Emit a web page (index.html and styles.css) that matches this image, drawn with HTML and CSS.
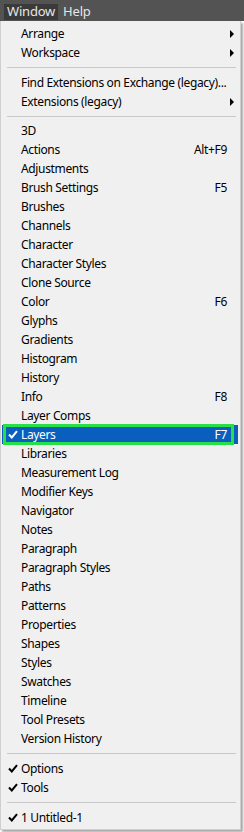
FILE: index.html
```html
<!DOCTYPE html>
<html>
<head>
<meta charset="utf-8">
<link rel="stylesheet" href="styles.css">
</head>
<body>
<div class="menubar">
  <span class="top-item active">Window</span>
  <span class="top-item">Help</span>
</div>
<div class="menu">
  <div class="row"><span class="label">Arrange</span><span class="arrow"></span></div>
  <div class="row"><span class="label">Workspace</span><span class="arrow"></span></div>
  <div class="sep"></div>
  <div class="row"><span class="label">Find Extensions on Exchange (legacy)...</span></div>
  <div class="row"><span class="label">Extensions (legacy)</span><span class="arrow"></span></div>
  <div class="sep sep-short"></div>
  <div class="row"><span class="label">3D</span></div>
  <div class="row"><span class="label">Actions</span><span class="key">Alt+F9</span></div>
  <div class="row"><span class="label">Adjustments</span></div>
  <div class="row"><span class="label">Brush Settings</span><span class="key">F5</span></div>
  <div class="row"><span class="label">Brushes</span></div>
  <div class="row"><span class="label">Channels</span></div>
  <div class="row"><span class="label">Character</span></div>
  <div class="row"><span class="label">Character Styles</span></div>
  <div class="row"><span class="label">Clone Source</span></div>
  <div class="row"><span class="label">Color</span><span class="key">F6</span></div>
  <div class="row"><span class="label">Glyphs</span></div>
  <div class="row"><span class="label">Gradients</span></div>
  <div class="row"><span class="label">Histogram</span></div>
  <div class="row"><span class="label">History</span></div>
  <div class="row"><span class="label">Info</span><span class="key">F8</span></div>
  <div class="row"><span class="label">Layer Comps</span></div>
  <div class="row selected">
    <svg class="check" viewBox="0 0 10 9" width="10" height="9"><path d="M1 4.5 L3.8 7.5 L9 1.2" fill="none" stroke="currentColor" stroke-width="2"/></svg>
    <span class="label">Layers</span><span class="key">F7</span>
    <span class="highlight-box"></span>
  </div>
  <div class="row"><span class="label">Libraries</span></div>
  <div class="row"><span class="label">Measurement Log</span></div>
  <div class="row"><span class="label">Modifier Keys</span></div>
  <div class="row"><span class="label">Navigator</span></div>
  <div class="row"><span class="label">Notes</span></div>
  <div class="row"><span class="label">Paragraph</span></div>
  <div class="row"><span class="label">Paragraph Styles</span></div>
  <div class="row"><span class="label">Paths</span></div>
  <div class="row"><span class="label">Patterns</span></div>
  <div class="row"><span class="label">Properties</span></div>
  <div class="row"><span class="label">Shapes</span></div>
  <div class="row"><span class="label">Styles</span></div>
  <div class="row"><span class="label">Swatches</span></div>
  <div class="row"><span class="label">Timeline</span></div>
  <div class="row"><span class="label">Tool Presets</span></div>
  <div class="row"><span class="label">Version History</span></div>
  <div class="sep"></div>
  <div class="row">
    <svg class="check" viewBox="0 0 10 9" width="10" height="9"><path d="M1 4.5 L3.8 7.5 L9 1.2" fill="none" stroke="currentColor" stroke-width="2"/></svg>
    <span class="label">Options</span>
  </div>
  <div class="row">
    <svg class="check" viewBox="0 0 10 9" width="10" height="9"><path d="M1 4.5 L3.8 7.5 L9 1.2" fill="none" stroke="currentColor" stroke-width="2"/></svg>
    <span class="label">Tools</span>
  </div>
  <div class="sep"></div>
  <div class="row">
    <svg class="check" viewBox="0 0 10 9" width="10" height="9"><path d="M1 4.5 L3.8 7.5 L9 1.2" fill="none" stroke="currentColor" stroke-width="2"/></svg>
    <span class="label">1 Untitled-1</span>
  </div>
</div>
</body>
</html>
```
FILE: styles.css
```css
* { box-sizing: border-box; }
html, body {
  margin: 0;
  padding: 0;
  background: #ffffff;
  width: 244px;
  height: 832px;
  overflow: hidden;
  font-family: "Noto Sans", "Open Sans", sans-serif;
  font-size: 12px;
}
.menubar {
  height: 21px;
  background: #535353;
  display: flex;
  align-items: flex-end;
  padding-left: 4px;
  padding-bottom: 1px;
}
.top-item {
  color: #e6e6e6;
  height: 16px;
  line-height: 15px;
  padding: 0 3px 0 3px;
  margin-right: 2px;
  font-size: 13px;
  letter-spacing: -0.2px;
}
.top-item.active {
  background: #3a3a3a;
}
.menu {
  width: 241px;
  background: #f0f0f0;
  border: 1px solid #cfcfcf;
  border-top: none;
  padding: 3px 2px 2px 1px;
  box-shadow: 2px 2px 2px rgba(0,0,0,0.35);
  letter-spacing: -0.35px;
}
.row {
  position: relative;
  height: 19px;
  display: flex;
  align-items: center;
  padding-left: 19px;
  padding-right: 11px;
  color: #000;
}
.label { flex: 1; white-space: nowrap; }
.key { white-space: nowrap; }
.arrow {
  width: 0;
  height: 0;
  border-left: 4px solid #000;
  border-top: 4px solid transparent;
  border-bottom: 4px solid transparent;
  margin-right: -7px;
}
.check {
  position: absolute;
  left: 6px;
  top: 5px;
  color: #000;
}
.sep {
  height: 1px;
  background: #c8c8c8;
  margin: 5px 2px 5px 5px;
}
.sep-short { margin-bottom: 4px; }
.selected {
  background: #0a5ebe;
  color: #fff;
}
.selected .check { color: #fff; }
.highlight-box {
  position: absolute;
  left: 1px;
  top: -1px;
  width: 231px;
  height: 21px;
  border: 3px solid #27e047;
  pointer-events: none;
}
```
